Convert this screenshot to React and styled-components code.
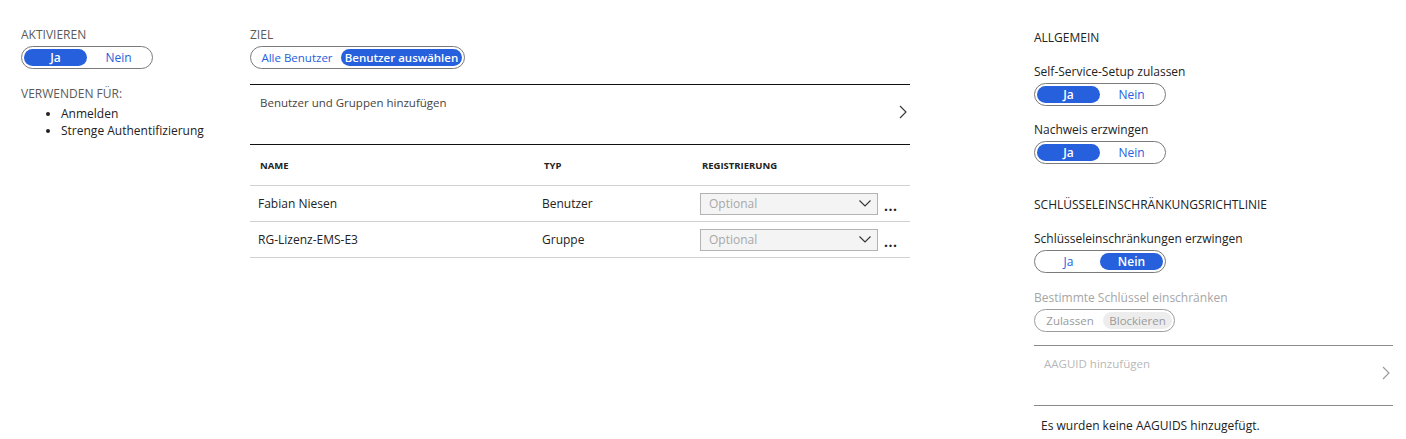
import styled, { createGlobalStyle } from "styled-components"

const Global = createGlobalStyle`
    body {
        margin: 0;
        background: #fff;
        font-family: "Open Sans", "Noto Sans", sans-serif;
        font-size: 12px;
        color: #323130;
    }
`

const Page = styled.div`
    display: flex;
    width: 1406px;
    height: 439px;
    padding: 27px 0 0 21px;
    box-sizing: border-box;
    overflow: hidden;
`
const Column = styled.div`
    display: flex;
    flex-direction: column;
    width: ${p => p.$w}px;
    margin-left: ${p => p.$ml || 0}px;
`
const Label = styled.div`
    font-size: 12px;
    line-height: 16px;
    color: ${p => p.$disabled ? "#a6a6a6" : p.$dark ? "#222" : "#5a5a5a"};
    margin-top: ${p => p.$mt || 0}px;
    margin-bottom: 3px;
`
const Toggle = styled.div`
    display: inline-flex;
    align-self: flex-start;
    border: 1px solid ${p => p.$disabled ? "#9c9c9c" : "#7a7a7a"};
    border-radius: 12px;
    padding: 2px;
    height: 17px;
`
const Seg = styled.div`
    width: ${p => p.$w}px;
    box-sizing: border-box;
    border-radius: 9px;
    text-align: center;
    white-space: nowrap;
    line-height: 17px;
    font-size: ${p => p.$fs || 12}px;
    font-weight: ${p => p.$on && !p.$disabled ? 600 : 400};
    color: ${p => p.$disabled ? "#9a9a9a" : p.$on ? "#fff" : "#2660dc"};
    background: ${p => p.$on ? (p.$disabled ? "#ededed" : "#2660dc") : "transparent"};
`
const List = styled.ul`
    margin: 0;
    padding-left: 40px;
    font-size: 12px;
    line-height: 17px;
    color: #222;
`
const Divider = styled.div`
    height: 0;
    margin-top: ${p => p.$mt || 0}px;
    border-top: 1px solid ${p => p.$c || "#111"};
`
const AddRow = styled.div`
    display: flex;
    justify-content: space-between;
    height: 59px;
    padding: 10px 3px 0 10px;
    box-sizing: border-box;
    color: ${p => p.$disabled ? "#b8b8b8" : "#444"};
    font-size: 11.5px;
    & svg {
        margin-top: 10px;
    }
`
const Table = styled.div`
    display: flex;
    flex-direction: column;
`
const Row = styled.div`
    display: grid;
    grid-template-columns: 284px 158px 178px auto;
    align-items: center;
    box-sizing: border-box;
    height: ${p => p.$h}px;
    padding-left: ${p => p.$head ? 10 : 8}px;
    border-bottom: 1px solid #d0d0d0;
    font-size: ${p => p.$head ? "9.5px" : "12px"};
    font-weight: ${p => p.$head ? 700 : 400};
    color: #222;
`
const Select = styled.div`
    display: flex;
    justify-content: space-between;
    align-items: center;
    height: 22px;
    width: 178px;
    box-sizing: border-box;
    border: 1px solid #b3b3b3;
    background: #f4f4f4;
    padding: 0 6px 0 8px;
    color: #a8a8a8;
    font-size: 12px;
`
const Dots = styled.div`
    padding-left: 6px;
    font-size: 14px;
    letter-spacing: 0.5px;
    margin-top: 4px;
    color: #222;
    font-weight: 700;
`
const Heading = styled.div`
    font-size: 12px;
    line-height: 16px;
    color: #222;
    margin-top: ${p => p.$mt || 0}px;
    margin-bottom: ${p => p.$mb || 0}px;
`
const Note = styled.div`
    padding: 11px 0 0 7px;
    color: #222;
    font-size: 12px;
`

const Chevron = ({ color = "#333" }) => (
    <svg width="8" height="14" viewBox="0 0 8 14">
        <path d="M1 1l6 6-6 6" fill="none" stroke={color} strokeWidth="1.1" />
    </svg>
)

const Caret = () => (
    <svg width="12" height="7" viewBox="0 0 12 7">
        <path d="M0.5 0.5l5.5 5.5 5.5-5.5" fill="none" stroke="#333" strokeWidth="1.1" />
    </svg>
)

function YesNo({ on, w = [63, 63], a = "Ja", b = "Nein", fs, disabled }) {
    return (
        <Toggle $disabled={disabled}>
            <Seg $w={w[0]} $fs={fs} $on={on === 0} $disabled={disabled}>{a}</Seg>
            <Seg $w={w[1]} $fs={fs} $on={on === 1} $disabled={disabled}>{b}</Seg>
        </Toggle>
    )
}

const members = [
    { name: "Fabian Niesen", type: "Benutzer" },
    { name: "RG-Lizenz-EMS-E3", type: "Gruppe" },
]

export default function App() {
    return (
        <Page>
            <Global />
            <Column $w={229}>
                <Label>AKTIVIEREN</Label>
                <YesNo on={0} />
                <Label $mt={17}>VERWENDEN FÜR:</Label>
                <List>
                    <li>Anmelden</li>
                    <li>Strenge Authentifizierung</li>
                </List>
            </Column>
            <Column $w={660}>
                <Label>ZIEL</Label>
                <YesNo on={1} w={[88, 121]} fs={11.5} a="Alle Benutzer" b="Benutzer auswählen" />
                <Divider $mt={15} />
                <AddRow>
                    <span>Benutzer und Gruppen hinzufügen</span>
                    <Chevron />
                </AddRow>
                <Divider />
                <Table>
                    <Row $head $h={41}>
                        <span>NAME</span>
                        <span>TYP</span>
                        <span>REGISTRIERUNG</span>
                    </Row>
                    {members.map(m => (
                        <Row key={m.name} $h={36}>
                            <span>{m.name}</span>
                            <span>{m.type}</span>
                            <Select>Optional <Caret /></Select>
                            <Dots>...</Dots>
                        </Row>
                    ))}
                </Table>
            </Column>
            <Column $w={359} $ml={124}>
                <Heading $mt={3} $mb={18}>ALLGEMEIN</Heading>
                <Label $dark>Self-Service-Setup zulassen</Label>
                <YesNo on={0} />
                <Label $dark $mt={16}>Nachweis erzwingen</Label>
                <YesNo on={0} />
                <Heading $mt={33} $mb={18}>SCHLÜSSELEINSCHRÄNKUNGSRICHTLINIE</Heading>
                <Label $dark>Schlüsseleinschränkungen erzwingen</Label>
                <YesNo on={1} />
                <Label $disabled $mt={17}>Bestimmte Schlüssel einschränken</Label>
                <YesNo on={1} w={[66, 69]} fs={11.5} disabled a="Zulassen" b="Blockieren" />
                <Divider $c="#8a8a8a" $mt={13} />
                <AddRow $disabled>
                    <span>AAGUID hinzufügen</span>
                    <Chevron color="#999" />
                </AddRow>
                <Divider $c="#8a8a8a" />
                <Note>Es wurden keine AAGUIDS hinzugefügt.</Note>
            </Column>
        </Page>
    )
}
